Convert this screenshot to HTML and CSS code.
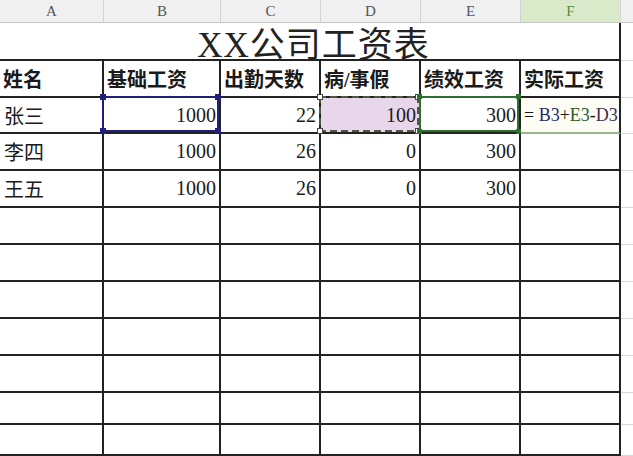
FILE: index.html
```html
<!DOCTYPE html>
<html lang="zh-CN">
<head>
    <meta charset="UTF-8">
    <title>XX公司工资表</title>
    <link rel="stylesheet" href="styles.css">
</head>
<body>
    <div class="sheet">
        <!-- 列标 -->
        <div class="col-head">A</div>
        <div class="col-head">B</div>
        <div class="col-head">C</div>
        <div class="col-head">D</div>
        <div class="col-head">E</div>
        <div class="col-head active">F</div>
        <div class="col-head last"></div>

        <!-- 标题 -->
        <div class="cell title">XX公司工资表</div>
        <div class="cell edge"></div>

        <!-- 表头 -->
        <div class="cell head">姓名</div>
        <div class="cell head">基础工资</div>
        <div class="cell head">出勤天数</div>
        <div class="cell head">病/事假</div>
        <div class="cell head">绩效工资</div>
        <div class="cell head">实际工资</div>
        <div class="cell edge"></div>

        <!-- 第3行 -->
        <div class="cell">张三</div>
        <div class="cell num sel">1000
            <span class="ref ref-b"><i class="dot tl"></i><i class="dot tr"></i><i class="dot bl"></i><i class="dot br"></i></span>
        </div>
        <div class="cell num">22</div>
        <div class="cell num sel marked">100
            <span class="ref ref-d"><i class="dot tl"></i><i class="dot tr"></i><i class="dot bl"></i><i class="dot br"></i></span>
        </div>
        <div class="cell num sel">300
            <span class="ref ref-e"><i class="dot tl"></i><i class="dot tr"></i><i class="dot bl"></i><i class="dot br"></i></span>
        </div>
        <div class="cell formula"><span>=&nbsp;<span class="fb">B3</span>+<span class="fe">E3</span>-<span class="fd">D3</span></span></div>
        <div class="cell edge"></div>

        <!-- 第4行 -->
        <div class="cell">李四</div>
        <div class="cell num">1000</div>
        <div class="cell num">26</div>
        <div class="cell num">0</div>
        <div class="cell num">300</div>
        <div class="cell"></div>
        <div class="cell edge"></div>

        <!-- 第5行 -->
        <div class="cell">王五</div>
        <div class="cell num">1000</div>
        <div class="cell num">26</div>
        <div class="cell num">0</div>
        <div class="cell num">300</div>
        <div class="cell"></div>
        <div class="cell edge"></div>
    </div>

    <script>
        // 空白行
        var sheet = document.querySelector('.sheet');
        for (var r = 0; r < 7; r++) {
            for (var c = 0; c < 7; c++) {
                var d = document.createElement('div');
                d.className = c === 6 ? 'cell edge' : 'cell';
                sheet.appendChild(d);
            }
        }
    </script>
</body>
</html>
```

FILE: styles.css
```css
body {
    margin: 0;
    background: #fff;
    font-family: "Liberation Serif", "Noto Sans CJK SC", serif;
    color: #1a1a1a;
}
.sheet {
    display: grid;
    grid-template-columns: 104px 117px 100px 100px 100px 100px 12px;
    grid-template-rows: 23px 38px 37px 36px repeat(7, 37px);
    width: 633px;
    height: 456px;
    overflow: hidden;
}
.col-head {
    background: #f0f0f0;
    border-right: 1px solid #d2d2d2;
    border-bottom: 1px solid #c6c6c6;
    color: #555;
    font-size: 15px;
    line-height: 22px;
    text-align: center;
}
.col-head.active {
    background: #d9eacb;
    color: #5b8c3e;
}
.col-head.last {
    border-right: none;
}
.cell {
    box-sizing: border-box;
    border-right: 2px solid #222;
    border-bottom: 2px solid #222;
    padding: 0 4px;
    display: flex;
    align-items: center;
    font-size: 20px;
    white-space: nowrap;
}
.cell.edge {
    border-right: none;
    border-bottom: 1px solid #d8d8d8;
}
.title {
    grid-column: span 6;
    justify-content: center;
    font-size: 35px;
    padding-top: 1px;
    padding-left: 12px;
    letter-spacing: 1px;
    color: #222;
}
.head {
    font-weight: bold;
    padding-left: 3px;
}
.num {
    justify-content: flex-end;
    padding-right: 3px;
}
.sel {
    position: relative;
}
.marked {
    background: #e8d6ea;
}
.ref {
    position: absolute;
    left: -2px;
    top: -2px;
    right: 0;
    bottom: 0;
    z-index: 1;
    border: 2px solid #1f1f7c;
}
.ref-d {
    border: none;
    background:
        repeating-linear-gradient(90deg, #4d5a40 0 7px, transparent 7px 11px) top left / 100% 2px no-repeat,
        repeating-linear-gradient(90deg, #4d5a40 0 7px, transparent 7px 11px) bottom left / 100% 2px no-repeat,
        repeating-linear-gradient(180deg, #4d5a40 0 7px, transparent 7px 11px) top left / 2px 100% no-repeat,
        repeating-linear-gradient(180deg, #4d5a40 0 7px, transparent 7px 11px) top right / 2px 100% no-repeat;
}
.ref-e {
    border: 2px solid #2e6e2e;
}
.dot {
    position: absolute;
    width: 6px;
    height: 6px;
    background: #1f1f7c;
}
.ref-d .dot {
    width: 4px;
    height: 4px;
    background: #fff;
    border: 1px solid #444;
}
.ref-d .dot.tl { left: -2px; top: -2px; }
.ref-d .dot.tr { right: -2px; top: -2px; }
.ref-d .dot.bl { left: -2px; bottom: -2px; }
.ref-d .dot.br { right: -2px; bottom: -2px; }
.ref-e .dot {
    width: 5px;
    height: 5px;
    background: #2e6e2e;
}
.dot.tl { left: -4px; top: -4px; }
.dot.tr { right: -4px; top: -4px; }
.dot.bl { left: -4px; bottom: -4px; }
.dot.br { right: -4px; bottom: -4px; }
.formula {
    background: #fdfdf6;
    border-bottom-color: #98b48e;
    font-size: 18px;
    padding-left: 3px;
    overflow: hidden;
}
.fb { color: #2a2a66; }
.fe { color: #2b5a2b; }
.fd { color: #3d2d48; }
```
